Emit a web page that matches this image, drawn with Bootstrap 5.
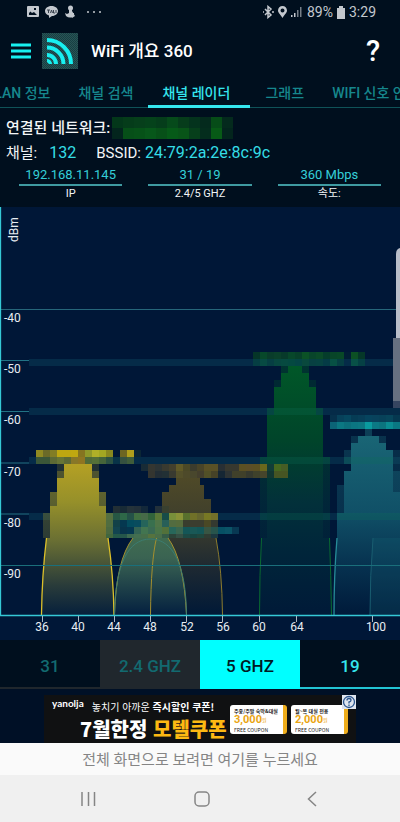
<!DOCTYPE html>
<html lang="ko">
<head>
<meta charset="utf-8">
<meta name="viewport" content="width=device-width, initial-scale=1">
<title>WiFi 개요 360</title>
<link rel="stylesheet" href="https://cdn.jsdelivr.net/npm/bootstrap@5.3.0/dist/css/bootstrap.min.css">
<style>
body{background:#000f1e;color:#f2f5f7;font-family:Roboto,"Noto Sans CJK KR",sans-serif;font-size:16px;line-height:24px;overflow-x:hidden}
svg{display:block}
button{font-family:inherit}
.cyan{color:#35dde6;font-size:16px}
.statusbar{height:24px;padding:0 24px 0 27px;font-size:14px;line-height:24px;color:#c3c8ce}
.appbar{height:54px;padding:0 20px 0 11px}
.appbar h1{font-size:17px;line-height:24px;font-weight:500;color:#fff}
.plain{background:none;border:0;padding:0;color:inherit}
.help{font-size:29px;line-height:32px;font-weight:500;color:#fff}
.tabs{height:30px;margin-left:-32px;font-size:14px;line-height:30px;font-weight:500;border-bottom:1px solid #0f5258}
.tabs a{color:#16878d;text-decoration:none;white-space:nowrap;flex:none;padding:0 14px;height:30px}
.tabs a.on{color:#35e6ee;border-bottom:3px solid #35e6ee;width:102px;margin:0 1px}
.info{padding:8px 6px 0;height:99px}
.info h2{font-size:15px;line-height:24px;font-weight:500}
.bss{font-size:15px;line-height:26px}
.stat{padding:0 13px}
.stat dt{font-size:13px;line-height:18px;font-weight:400;color:#35cfd8;border-bottom:2px solid #3f9aa1}
.stat dd{font-size:11px;line-height:16px}
.ssid{margin-left:2px}
.chart text{font-size:12px;fill:#e8edf2}
.bands button{height:49px;border:0;border-bottom:2px solid #20272d;background:#000f1e;color:#126a70;font-size:17px;font-weight:500;padding:4px 0 0}
.bands .dim{background:#20272d}
.bands .on{background:#0ff;border-color:#0ff;color:#001a24}
.bands .five{color:#35e6ee;border-color:#22c4d4}
.adwrap{background:#001026;padding-top:6px}
.ad{width:78%;height:48px;background:#101112;color:#fff;text-decoration:none;font-family:"Noto Sans CJK KR",sans-serif}
.brand{font:700 10px/16px Lato,sans-serif}
.line1{font-size:10px;line-height:20px;padding-top:2px}
.line2{font-size:20px;line-height:24px;font-weight:900}
.gold{color:#fdb913}
.coupon{width:57px;height:29px;background:#fff;border-radius:3px;border-right:4px solid #eead1c;padding:2px 0 0 4px;color:#222;font-size:5px;line-height:7px;overflow:hidden;white-space:nowrap}
.price{line-height:12px;color:#eaa512}
.price strong{font-size:11px;font-family:Roboto,sans-serif}
.adchoice{position:absolute;right:0;top:0;background:#dfe5ee}
.hint{background:#fafafa;color:#858585;height:32px;font-size:15px;line-height:34px}
.sysnav{background:#f0f0f0;height:47px;padding:0 80px 0 76px}
</style>
</head>
<body>
<div class="statusbar d-flex align-items-center">
  <svg width="76" height="14" viewBox="0 0 76 14" fill="#c3c8ce" aria-hidden="true">
    <path fill-rule="evenodd" d="M1 1h10q1 0 1 1v9q0 1-1 1H1q-1 0-1-1V2q0-1 1-1zm1 9h8L7 7 5 8 3.500 6.500 2 8zM7 3v2h2V3z"/>
    <path d="M24.500 1C28.500 1 31 3.500 31 6s-2.500 5-6 5l-3 2v-2.500C19.500 10 18 8 18 6c0-2.500 2.500-5 6.500-5z"/>
    <path d="M20 5h3M21.500 5v3M23.500 8l1-3 1 3M26.500 5v3h1.500M29 5v3" stroke="#39424e" fill="none"/>
    <circle cx="43.500" cy="3" r="2.500"/><path d="M42 5h3v3h2v3q-4 3-8 0l-1-3 2 1 2-1zM45 6l3 5-3 2z"/>
    <circle cx="61" cy="7" r="1"/><circle cx="67" cy="7" r="1"/><circle cx="73" cy="7" r="1"/>
  </svg>
  <svg class="ms-auto me-1" width="40" height="14" viewBox="0 0 40 14" fill="#c3c8ce" aria-hidden="true">
    <path d="M2 4l6 6-3 2.500v-11L8 4l-6 6M0 7h1M9 7h2" fill="none" stroke="#c3c8ce" stroke-width="1.500"/>
    <path fill-rule="evenodd" d="M19.500 1C22 1 24 3 24 5.500S21 10 19.500 13C18 10 15 8 15 5.500S17 1 19.500 1zm0 2.500a2 2 0 100 4 2 2 0 000-4z"/>
    <path d="M28 10h1.500v2H28zM31 8h1.500v4H31z"/><path d="M34 5h1.500v7H34zM37 2h1.500v10H37z" opacity=".6"/>
  </svg>
  <span>89%</span>
  <svg class="mx-1" width="8" height="13" viewBox="0 0 8 13" aria-hidden="true"><path d="M2 0h4v2h2v11H0V2h2z" fill="#c3c8ce"/></svg>
  <span>3:29</span>
</div>

<header class="appbar d-flex align-items-center">
  <button class="plain" type="button" aria-label="메뉴"><svg width="20" height="16" viewBox="0 0 20 16"><path d="M0 2h20M0 8h20M0 14h20" stroke="#18f0f0" stroke-width="3"/></svg></button>
  <svg class="ms-2" width="40" height="36" viewBox="-3 0 40 36" aria-hidden="true">
    <defs><pattern id="mesh" width="2" height="2" patternUnits="userSpaceOnUse"><path d="M0 0h1v1H0zM1 1h1v1H1z" fill="#285555"/></pattern></defs>
    <path d="M0 0h36v36H0z" fill="#183e43"/><path d="M0 0h36v36H0z" fill="url(#mesh)"/>
    <path d="M5 7A24 24 0 0129 31M5 14.500A16.500 16.500 0 0121.500 31M5 22A9 9 0 0114 31" fill="none" stroke="#18f0f0" stroke-width="4"/><path d="M5 26a5 5 0 015 5H7l-2-2z" fill="#18f0f0"/>
  </svg>
  <h1 class="mb-0 ms-2 ps-1">WiFi 개요 360</h1>
  <button class="plain help ms-auto" type="button" aria-label="도움말">?</button>
</header>

<div class="overflow-hidden">
  <nav class="tabs d-flex">
    <a href="#">WLAN 정보</a><a href="#">채널 검색</a><a href="#" class="on" aria-current="page">채널 레이더</a><a href="#">그래프</a><a href="#">WIFI 신호 안내</a>
  </nav>
</div>

<section class="info">
  <div class="d-flex align-items-center">
    <h2 class="mb-0">연결된 네트워크:</h2>
    <svg class="ssid" width="121" height="22" viewBox="0 0 121 22" id="ssid" shape-rendering="crispEdges" role="img" aria-label="네트워크 이름"></svg>
  </div>
  <div class="bss d-flex">
    <span>채널:</span><span class="cyan ms-2 ps-1">132</span><span class="ms-3 ps-1">BSSID:</span><span class="cyan ms-1">24:79:2a:2e:8c:9c</span>
  </div>
  <dl class="row g-0 text-center mb-0">
    <div class="col-4 stat"><dt>192.168.11.145</dt><dd class="mb-0">IP</dd></div>
    <div class="col-4 stat"><dt>31 / 19</dt><dd class="mb-0">2.4/5 GHZ</dd></div>
    <div class="col-4 stat"><dt>360 Mbps</dt><dd class="mb-0">속도:</dd></div>
  </dl>
</section>

<svg class="chart w-100" viewBox="0 207 400 433" role="img" aria-label="채널 레이더">
  <defs>
    <linearGradient id="gy" gradientUnits="userSpaceOnUse" x1="0" y1="464" x2="0" y2="615"><stop offset="0" stop-color="#b4a024"/><stop offset=".25" stop-color="#96902a"/><stop offset=".5" stop-color="#6b7033"/><stop offset=".8" stop-color="#2a3c3a"/><stop offset="1" stop-color="#06203c"/></linearGradient>
    <linearGradient id="go" gradientUnits="userSpaceOnUse" x1="0" y1="464" x2="0" y2="615"><stop offset="0" stop-color="#544d26"/><stop offset=".4" stop-color="#3c3d2d"/><stop offset=".7" stop-color="#1c2832"/><stop offset="1" stop-color="#001937"/></linearGradient>
    <linearGradient id="gs" gradientUnits="userSpaceOnUse" x1="0" y1="527" x2="0" y2="615"><stop offset="0" stop-color="#43704f"/><stop offset=".35" stop-color="#3a6352"/><stop offset="1" stop-color="#042040"/></linearGradient>
    <linearGradient id="gg" gradientUnits="userSpaceOnUse" x1="0" y1="366" x2="0" y2="615"><stop offset="0" stop-color="#005728"/><stop offset=".3" stop-color="#00442a"/><stop offset=".55" stop-color="#02303a"/><stop offset=".75" stop-color="#00253a"/><stop offset="1" stop-color="#001a38"/></linearGradient>
    <linearGradient id="gt" gradientUnits="userSpaceOnUse" x1="0" y1="429" x2="0" y2="615"><stop offset="0" stop-color="#1a6776"/><stop offset=".45" stop-color="#105067"/><stop offset=".75" stop-color="#06304e"/><stop offset="1" stop-color="#001a3a"/></linearGradient>
  </defs>
  <path d="M0 207h400v433H0z" fill="#001737"/>
  <path d="M29 359h371v7H29zM29 408h371v7H29zM29 457h371v7H29zM29 513h371v7H29z" fill="#052b48"/>
  <g shape-rendering="crispEdges" id="steps"></g>
  <path d="M46.500 538Q42 575 41.500 615H114Q113.500 575 108 538z" fill="url(#gy)"/>
  <path d="M158 538Q151 575 150.500 615h72Q222 575 216 538z" fill="url(#go)"/>
  <path d="M133 538Q116 560 114.500 615h72Q184 560 168 538z" fill="url(#gs)"/>
  <path d="M261.500 538L259.500 615H332L329.500 538z" fill="url(#gg)"/>
  <path d="M337 538Q334 575 334 615H400V538z" fill="url(#gt)"/>
  <path d="M373 538Q370 575 370 615H400V538z" fill="#1b6f7c" opacity=".2"/>
  <g fill="none">
    <path d="M46.500 538Q42 575 41.500 615M108 538Q113.500 575 114 615" stroke="#dcc02a" stroke-width="1.300"/>
    <path d="M133 538Q116 560 114.500 615M168 538Q184 560 186.500 615M156.500 538Q151 560 150.500 615" stroke="#a5902e"/>
    <path d="M114.500 615C115 565 128 539 150.500 539S186 565 186.500 615" stroke="#3c7c70"/>
    <path d="M216 538Q222 570 222.500 615" stroke="#8d7c2d"/>
    <path d="M261.500 538Q259.500 575 259.500 615M329.500 538Q331 575 331.500 615" stroke="#096b31"/>
    <path d="M337 538Q334 575 334 615" stroke="#268c98" stroke-width="1.300"/>
    <path d="M373 538Q370 575 370 615" stroke="#195d70"/>
  </g>
  <g shape-rendering="crispEdges" id="cells"></g>
  <path d="M0 309.500h400" stroke="#26667a"/>
  <path d="M0 360.500h29M0 411.500h29M0 463h29M0 514h29" stroke="#227385"/>
  <path d="M0 565.500h400" stroke="#1a6f7b"/>
  <path d="M0 615.500h400M.5 207v409" stroke="#35c9d6" stroke-width="1.300"/>
  <path d="M42.500 616v6M78.500 616v6M114.500 616v6M150.500 616v6M186.500 616v6M222.500 616v6M259.500 616v6M296.500 616v6M372.500 616v6" stroke="#aab8c4"/>
  <g><text x="4" y="322">-40</text><text x="4" y="373">-50</text><text x="4" y="424">-60</text><text x="4" y="476">-70</text><text x="4" y="527">-80</text><text x="4" y="578">-90</text></g>
  <text transform="translate(18 242) rotate(-90)">dBm</text>
  <g text-anchor="middle"><text x="42" y="631">36</text><text x="78" y="631">40</text><text x="114" y="631">44</text><text x="150" y="631">48</text><text x="187" y="631">52</text><text x="223" y="631">56</text><text x="259" y="631">60</text><text x="297" y="631">64</text><text x="376" y="631">100</text></g>
  <path d="M400 248q-4 1-4 6v84h4z" fill="#b9bec9"/><path d="M393 338h7v63h-7z" fill="#667080"/><path d="M393 401h7v7h-7z" fill="#364560"/>
</svg>

<div class="bands row g-0">
  <button type="button" class="col-3">31</button><button type="button" class="col-3 dim">2.4 GHZ</button><button type="button" class="col-3 on">5 GHZ</button><button type="button" class="col-3 five">19</button>
</div>

<div class="adwrap">
  <a href="#" class="ad d-flex position-relative mx-auto overflow-hidden">
    <div class="text-nowrap ps-2">
      <div class="d-flex"><span class="brand">yanolja</span><span class="line1 ms-1 ps-1">놓치기 아까운 <b>즉시할인 쿠폰!</b></span></div>
      <div class="line2 ms-4 ps-1">7월한정 <span class="gold">모텔쿠폰</span></div>
    </div>
    <div class="d-flex gap-1 ms-auto me-2 align-self-center">
      <div class="coupon"><b class="d-block">주중/주말 숙박&amp;대실</b><div class="price d-flex"><strong>3,000</strong>원</div>FREE COUPON</div>
      <div class="coupon"><b class="d-block">월~목 대실 전용</b><div class="price d-flex"><strong>2,000</strong>원</div>FREE COUPON</div>
    </div>
    <svg class="adchoice" width="14" height="14" viewBox="0 0 14 14" aria-hidden="true"><circle cx="7" cy="7" r="5.500" fill="none" stroke="#2b568f" stroke-width="1.300"/><path d="M5 5.500q0-2 2-2t2 1.700Q9 6.500 7 7v1.500M7 9.500V11" fill="none" stroke="#2b568f" stroke-width="1.300"/></svg>
  </a>
</div>
<div class="hint text-center">전체 화면으로 보려면 여기를 누르세요</div>
<div class="sysnav d-flex justify-content-between align-items-center">
  <button class="plain" type="button" aria-label="최근 앱"><svg width="24" height="16" viewBox="0 0 24 16"><path d="M6 1v14M12.500 1v14M18.500 1v14" stroke="#858585" stroke-width="1.500"/></svg></button>
  <button class="plain" type="button" aria-label="홈"><svg width="16" height="16" viewBox="0 0 16 16"><rect x="1" y="1" width="14" height="14" rx="4" fill="none" stroke="#858585" stroke-width="1.500"/></svg></button>
  <button class="plain" type="button" aria-label="뒤로"><svg width="16" height="16" viewBox="0 0 16 16"><path d="M12 1L4.500 8l7.500 7" fill="none" stroke="#858585" stroke-width="1.500"/></svg></button>
</div>

<script src="https://cdn.jsdelivr.net/npm/bootstrap@5.3.0/dist/js/bootstrap.bundle.min.js"></script>
<script>
const NS = 'http://www.w3.org/2000/svg';
function box(parent, x, y, w, h, fill, opacity) {
  const r = document.createElementNS(NS, 'rect');
  Object.entries({x, y, width: w, height: h, fill, opacity: opacity ?? 1}).forEach(([k, v]) => r.setAttribute(k, v));
  parent.append(r);
}
const steps = document.getElementById('steps');
// Each peak: gradient, then [top, bottom, left, right, opacity] slabs
const peaks = {
  gt: [[429,436,365,372,.5],[436,443,351,386,.35],[436,443,358,379],[443,450,351,386],[450,464,344,393,.4],[450,471,351,393],[471,492,344,393],[485,513,337,344,.45],[492,513,344,400],[471,513,379,400,.5],[450,492,393,400,.3],[513,538,337,400]],
  gg: [[366,373,288,302],[366,380,281,309,.45],[373,387,281,309],[380,387,274,316,.3],[387,408,274,316],[387,394,274,281,.5],[408,415,267,323,.4],[408,415,274,316],[415,464,267,323],[457,538,260,330,.6],[464,538,267,323]],
  go: [[464,478,176,197,.7],[471,485,176,200],[485,492,169,204],[492,499,162,204],[499,513,162,211],[513,520,155,211],[520,538,155,218]],
  gy: [[464,471,57,99,.2],[464,471,64,92],[471,478,57,99,.45],[471,478,64,92],[478,492,57,99],[492,506,50,106,.6],[492,506,57,99],[506,538,50,106],[513,538,43,113,.4]],
  gs: [[527,534,134,169,.8],[534,538,127,176,.9]]
};
for (const [g, slabs] of Object.entries(peaks))
  for (const [t, b, l, r, o] of slabs) box(steps, l, t, r - l, b - t, `url(#${g})`, o);
// the wide bands stay visible through the peaks
[[267,408,56],[260,457,70],[260,513,70],[344,457,49],[337,513,63]].forEach(([x, y, w]) => box(steps, x, y, w, 7, '#0a7058', .25));
const rows = [
  [36,450,'8f8922 6b6a28 827d25 bea711 bea711 c0a810 857420 8f982a b0b028 a3a822 88881f - 6d6522 b09f1c 0b2635'],
  [36,457,'3a5638 3a5638 5d6a35 687536 5d6a35 887728 907522 506b38 557038 45653a 2c5242 083348 355140 3f5c3a'],
  [141,464,'182b36 343631 2c3435 393a30 43402d 605a28 4b4927 3c3c2d 494428 5a5126 5a5126 282f34 37382f 37382f 5b5023 5c4e27 5b5023 69681d 123d37 46681f 465d25'],
  [148,471,'343530 222d35 223035 393a30 54502a 4e4a2a 49472d 443f2d 525027 464227 152634 2d3334 40402a 40402a 36392e 3f412b 46452b 123731 465523 465523'],
  [113,506,'222f35 182b36 25333a 22303a 13283a - 22303a 39402f'],
  [106,513,'556f40 275744 2e6848 245248 406f42 466a48 31633b 5a7838 174c48 78903a 899338 58702d 707028 66662e 787824 72702a'],
  [106,520,'506d40 124148 053850 034c5e 084c5e 25645a 39704e 4f7548 285f58 536c40 566c3c 393d2e 3b3d2f 3b3d2f 4a4825 343930'],
  [106,527,'4b6940 124450 08344b 053750 336354 427550 3a6a53 4a7548 53713a 28675a 3a6750 145657 195856 145657 385543 27544c 065064 0a5367 083853'],
  [106,534,'40663d 235849 25564b 3d6950 436e50 466e49 56733e 4a6e49 365c47 2c4439 355045 1c4a45 184641 20483e 303c33 1c3840',4],
  [253,352,'053528 07482a 093c2a 0a402a 073a2a 07472a 074029 0b5126 08452a 0a4a28 053d2b 084528 084827 011d35 0c5024 053728'],
  [253,359,'053e43 074a43 063e43 074740 064a40 044941 044544 09493d 074042 064242 043b46 075044 063e43 - 085047 054044'],
  [330,415,'06304b 07415a 06475f 053c55 073e58 06445e 08425c 074159 07455b 053850'],
  [330,422,'0b6477 0b7883 0b6f7c 0b7582 0c7883 0a9b9f 0b7985 0b747f 0a8c92 0a7883']
];
const cells = document.getElementById('cells');
rows.forEach(([x, y, list, h = 7]) => list.split(' ').forEach((c, i) => c !== '-' && x + i * 7 < 400 && box(cells, x + i * 7, y, 7, h, '#' + c)));
const ssid = document.getElementById('ssid');
['03371a 053c1a 063f1b 05421b 053d1b 064a1b 063c1b 04331d 042a1d 064c18 042a1d', '03251d 064f18 065218 07571a 075018 065a18 085418 063f1b 042d1d 075a16 03251d']
  .forEach((r, j) => r.split(' ').forEach((c, i) => box(ssid, i * 11, j * 11, 11, 11, '#' + c)));
</script>
</body>
</html>
